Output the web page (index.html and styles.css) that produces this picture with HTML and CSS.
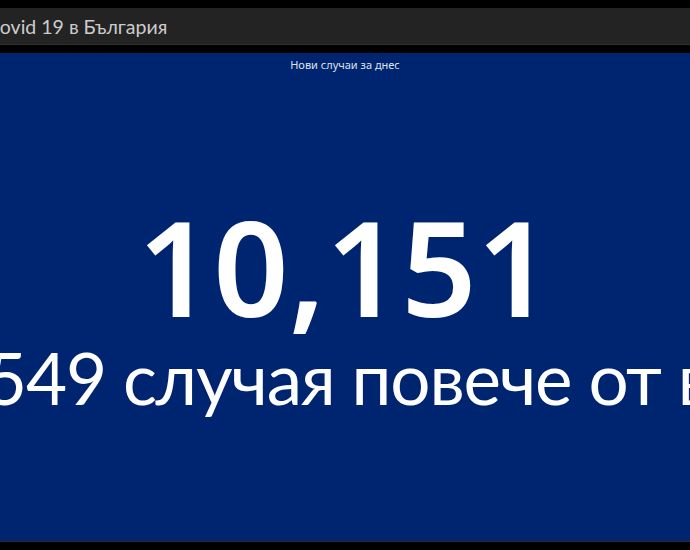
FILE: index.html
```html
<!DOCTYPE html>
<html lang="bg">
<head>
    <meta charset="UTF-8">
    <meta name="viewport" content="width=device-width, initial-scale=1.0">
    <title>Covid 19 в България</title>
    <link rel="stylesheet" href="styles.css">
</head>
<body>

    <div class="page">
        <!-- Header -->
        <div class="header">
            <span class="title">Covid 19 в България</span>
        </div>

        <!-- Indicator -->
        <div class="panel">
            <p class="label">Нови случаи за днес</p>
            <p class="value">10,151</p>
            <p class="delta">549 случая повече от вчера</p>
        </div>
    </div>

</body>
</html>
```

FILE: styles.css
```css
body { margin: 0; background: #000; overflow: hidden; font-family: Lato, "Noto Sans", sans-serif; }
p { margin: 0; }
.page { height: 550px; padding-top: 8px; box-sizing: border-box; display: flex; flex-direction: column; }
.header { height: 36px; background: #232323; border-bottom: 1px solid #303030; display: flex; align-items: center; overflow: hidden; }
.title { color: #cccccc; font-size: 19.5px; white-space: nowrap; text-indent: -13px; display: block; }
.panel { margin-top: 8px; height: 488px; background: #002570; border-bottom: 1px solid #2b2b2b; overflow: hidden; display: flex; flex-direction: column; align-items: center; color: #fff; }
.label { font-family: "Noto Sans", sans-serif; font-size: 11px; color: #dde2ee; margin-top: 4px; }
.value { font-family: "Noto Sans", sans-serif; font-size: 132px; font-weight: 600; line-height: 1; margin-top: 128px; }
.delta { font-size: 71px; letter-spacing: -1.2px; line-height: 1; margin-top: 10px; white-space: nowrap; align-self: stretch; margin-left: -14px; }
```
